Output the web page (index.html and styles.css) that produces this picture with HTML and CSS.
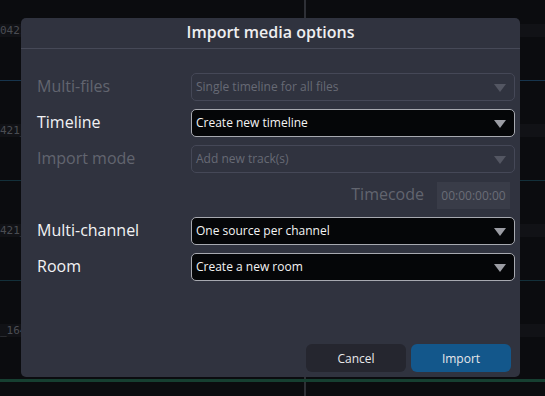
FILE: index.html
```html
<!DOCTYPE html>
<html lang="en">
<head>
  <meta charset="UTF-8" />
  <title>Import media options</title>
  <link rel="stylesheet" href="styles.css">
</head>
<body>

  <div class="timeline">
    <div class="playhead"></div>
    <div class="track"><span class="clip-name">0421</span><div class="wave blue"></div></div>
    <div class="track"><span class="clip-name">421_</span><div class="wave"></div></div>
    <div class="track"><span class="clip-name">421_</span><div class="wave"></div></div>
    <div class="track"><span class="clip-name">_164</span><div class="wave green"></div></div>
  </div>

  <div class="modal">
    <div class="modal-title">Import media options</div>
    <div class="modal-body">
      <div class="row disabled">
        <label>Multi-files</label>
        <div class="select">Single timeline for all files</div>
      </div>
      <div class="row">
        <label>Timeline</label>
        <div class="select">Create new timeline</div>
      </div>
      <div class="row disabled">
        <label>Import mode</label>
        <div class="select">Add new track(s)</div>
      </div>
      <div class="row timecode">
        <label>Timecode</label>
        <div class="tc-input">00:00:00:00</div>
      </div>
      <div class="row">
        <label>Multi-channel</label>
        <div class="select">One source per channel</div>
      </div>
      <div class="row">
        <label>Room</label>
        <div class="select">Create a new room</div>
      </div>
    </div>
    <div class="modal-footer">
      <button class="btn cancel">Cancel</button>
      <button class="btn primary">Import</button>
    </div>
  </div>

</body>
</html>
```

FILE: styles.css
```css
html, body { margin: 0; height: 100%; }
body {
  background: #0b0c0f;
  font-family: "Open Sans", "Noto Sans", sans-serif;
  color: #eee;
  overflow: hidden;
  position: relative;
}

/* timeline behind the dialog */
.timeline {
  position: relative;
  height: 100%;
  box-sizing: border-box;
  padding-top: 24px;
  overflow: hidden;
}
.playhead { position: absolute; left: 304px; top: 0; bottom: 0; width: 2px; background: #2e3036; }
.track { height: 100px; position: relative; }
.clip-name {
  display: block;
  width: 100%;
  height: 13px;
  background: #111216;
  font-family: "DejaVu Sans Mono", monospace;
  font-size: 11px;
  line-height: 13px;
  color: #4a4c52;
}
.wave { position: absolute; left: 0; right: 0; top: 56px; height: 1px; background: #13303a; }
.wave.blue { background: #17354d; }
.wave.green { top: 55px; height: 3px; background: #163f31; }

/* dialog */
.modal {
  position: absolute;
  left: 21px;
  top: 18px;
  width: 499px;
  height: 359px;
  background: #30333f;
  border-radius: 5px;
  display: flex;
  flex-direction: column;
}
.modal-title {
  height: 30px;
  border-bottom: 1px solid #464957;
  text-align: center;
  font-size: 16px;
  font-weight: 600;
  line-height: 28px;
  color: #eeeef0;
}
.modal-body {
  display: flex;
  flex-direction: column;
  gap: 8px;
  padding: 24px 5px 0 16px;
  flex: 1;
}
.row {
  display: flex;
  align-items: center;
  height: 28px;
}
.row label {
  width: 154px;
  font-size: 16px;
  line-height: 24px;
  margin-top: -2px;
  color: #f2f2f4;
}
.select {
  flex: 1;
  box-sizing: border-box;
  height: 28px;
  border: 1px solid #a7a9b0;
  border-radius: 5px;
  background: #050608;
  color: #f4f4f4;
  font-size: 12px;
  line-height: 26px;
  padding-left: 4px;
  position: relative;
}
.select::after {
  content: "";
  position: absolute;
  right: 8px;
  top: 10px;
  border-left: 6px solid transparent;
  border-right: 6px solid transparent;
  border-top: 8px solid #9b9ca3;
}
.row.disabled label { color: #62656f; }
.row.disabled .select {
  background: #30333f;
  border-color: #454857;
  color: #676a75;
}
.row.disabled .select::after { border-top-color: #535662; }

.row.timecode { justify-content: flex-end; padding-right: 5px; }
.row.timecode label {
  width: auto;
  margin-right: 13px;
  color: #62656f;
}
.tc-input {
  width: 73px;
  height: 27px;
  background: #393c48;
  color: #6a6d77;
  font-size: 12px;
  line-height: 27px;
  text-align: center;
}

.modal-footer {
  display: flex;
  justify-content: flex-end;
  gap: 5px;
  padding: 0 9px 5px 0;
}
.btn {
  width: 100px;
  height: 28px;
  border: none;
  border-radius: 6px;
  font-family: "Open Sans", "Noto Sans", sans-serif;
  font-size: 12px;
  color: #e8e8ea;
}
.btn.cancel { background: #25262f; }
.btn.primary { background: #13578b; }
```
